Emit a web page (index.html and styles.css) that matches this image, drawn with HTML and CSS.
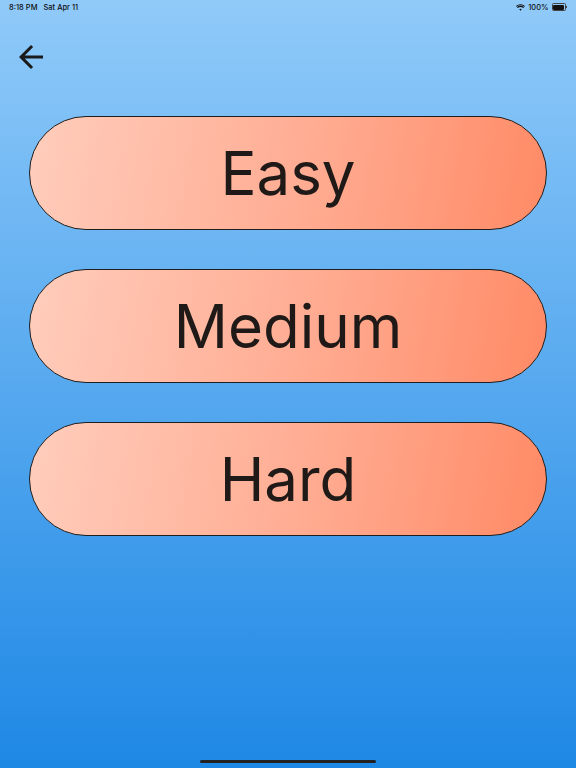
FILE: index.html
```html
<!DOCTYPE html>
<html>
<head>
<meta charset="utf-8">
<link rel="stylesheet" href="styles.css">
</head>
<body>
<div class="screen">
  <div class="status">
    <div class="status-left"><span>8:18 PM</span><span class="date">Sat Apr 11</span></div>
    <div class="status-right">
      <svg class="wifi" width="9" height="7" viewBox="0 0 18 13"><path d="M9 13l2.6-2.9a3.8 3.8 0 0 0-5.2 0zM9 5.6a8 8 0 0 1 5.4 2.1l1.7-1.9A10.6 10.6 0 0 0 9 3a10.6 10.6 0 0 0-7.1 2.8l1.7 1.9A8 8 0 0 1 9 5.6zM9 0A14 14 0 0 0 0 3.3l1.3 1.5A12 12 0 0 1 9 2a12 12 0 0 1 7.7 2.8L18 3.3A14 14 0 0 0 9 0z" fill="#111"/></svg>
      <span class="pct">100%</span>
      <span class="battery"><span class="fill"></span></span><span class="nub"></span>
    </div>
  </div>
  <div class="topbar">
    <svg class="back" width="36" height="36" viewBox="0 0 24 24"><path d="M20 11H7.83l5.59-5.59L12 4l-8 8 8 8 1.41-1.41L7.83 13H20v-2z" fill="#1a1a1a"/></svg>
  </div>
  <div class="buttons">
    <div class="btn">Easy</div>
    <div class="btn">Medium</div>
    <div class="btn">Hard</div>
  </div>
  <div class="home"></div>
</div>
</body>
</html>
```
FILE: styles.css
```css
html, body { margin: 0; padding: 0; }
body { font-family: Inter, "Noto Sans", sans-serif; }
.screen {
  width: 576px; height: 768px; position: relative; overflow: hidden;
  background: linear-gradient(to bottom, #90caf9 0%, #1e88e5 100%);
  display: flex; flex-direction: column;
}
.status {
  height: 14px; display: flex; justify-content: space-between; align-items: center;
  padding: 0 9px; font-size: 7.5px; color: #111; font-weight: 500;
}
.status-left .date { margin-left: 6px; }
.status-right { display: flex; align-items: center; }
.wifi { margin-right: 3px; }
.pct { margin-right: 3px; }
.battery {
  width: 11px; height: 5px; border: 0.5px solid #444; border-radius: 1.5px;
  padding: 0.5px; box-sizing: content-box; display: flex;
}
.battery .fill { flex: 1; background: #111; border-radius: 1px; }
.nub { width: 1px; height: 2px; background: #444; margin-left: 0.5px; }
.topbar { height: 101px; padding-left: 13px; padding-top: 25px; box-sizing: border-box; }
.back { display: block; }
.buttons { display: flex; flex-direction: column; gap: 39px; padding: 1px 29px 0 29px; }
.btn {
  height: 112px; border: 1px solid #1e1e1e; border-radius: 57px;
  background: linear-gradient(100deg, #ffcdbc 0%, #ffab91 55%, #ff8a65 100%);
  display: flex; align-items: center; justify-content: center;
  font-size: 60px; color: #1f1a17;
}
.home {
  position: absolute; left: 200px; bottom: 5px; width: 176px; height: 3px;
  border-radius: 2px; background: #222;
}
```
